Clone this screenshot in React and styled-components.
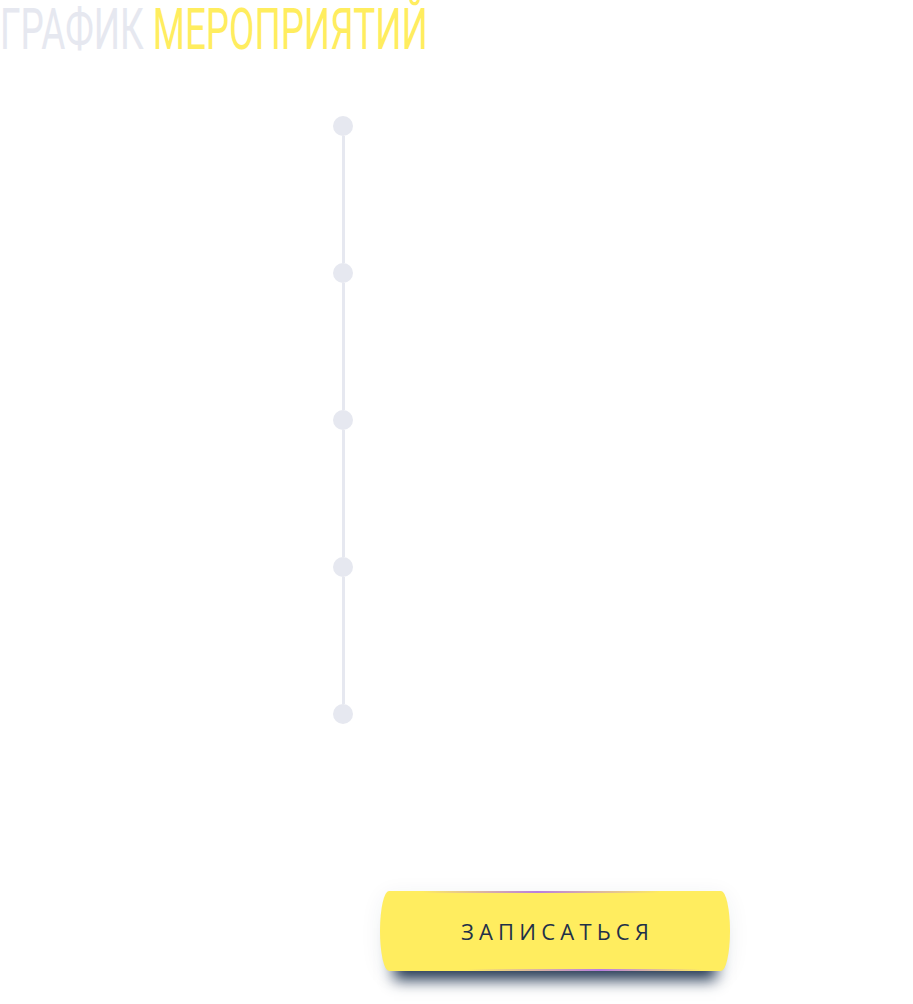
import React from 'react';
import styled, { createGlobalStyle } from 'styled-components';

const GlobalStyle = createGlobalStyle`
    html, body {
        margin: 0;
        padding: 0;
        background: #fff;
    }
    body {
        font-family: 'Open Sans', 'Liberation Sans', sans-serif;
    }
`;

const Page = styled.div`
    width: 913px;
    height: 1004px;
    overflow: hidden;
    display: flex;
    flex-direction: column;
`;

const Title = styled.h1`
    margin: 0;
    height: 60px;
    font-family: Roboto, 'Liberation Sans', sans-serif;
    font-weight: 400;
    font-size: 57px;
    line-height: 60px;
    white-space: nowrap;
    color: #e6e8f0;
    transform: scaleX(0.646);
    transform-origin: 0 0;
`;

const Accent = styled.span`
    color: #ffed5f;
`;

const Timeline = styled.div`
    display: flex;
    flex-direction: column;
    align-items: center;
    width: 20px;
    margin: 56px 0 0 333px;
`;

const Step = styled.div`
    display: flex;
    flex-direction: column;
    align-items: center;
`;

const Dot = styled.div`
    width: 20px;
    height: 20px;
    border-radius: 50%;
    background: #e6e8f0;
`;

const Segment = styled.div`
    width: 3px;
    height: 127px;
    background: #e6e8f0;
`;

const Button = styled.button`
    margin: 167px 0 0 380px;
    width: 350px;
    height: 80px;
    border: none;
    border-radius: 9px / 50%;
    background:
        linear-gradient(90deg, rgba(185, 127, 224, 0) 12%, #b97fe0 45%, rgba(185, 127, 224, 0) 80%) top / 100% 2px no-repeat,
        linear-gradient(90deg, rgba(185, 127, 224, 0) 25%, #b97fe0 63%, rgba(185, 127, 224, 0) 92%) bottom / 100% 2px no-repeat,
        #ffed5f;
    box-shadow: 0 23px 14px -14px #263a55, 0 4px 22px rgba(30, 50, 80, 0.07);
    font-family: 'Open Sans', 'Liberation Sans', sans-serif;
    font-size: 22px;
    font-weight: 400;
    letter-spacing: 5.2px;
    padding: 0 0 0 5px;
    color: #1f3149;
    cursor: pointer;
`;

const steps = [0, 1, 2, 3, 4];

export default function App() {
    return (
        <Page>
            <GlobalStyle />
            <Title>
                ГРАФИК <Accent>МЕРОПРИЯТИЙ</Accent>
            </Title>
            <Timeline>
                {steps.map((s) => (
                    <Step key={s}>
                        <Dot />
                        {s < steps.length - 1 && <Segment />}
                    </Step>
                ))}
            </Timeline>
            <Button>ЗАПИСАТЬСЯ</Button>
        </Page>
    );
}
